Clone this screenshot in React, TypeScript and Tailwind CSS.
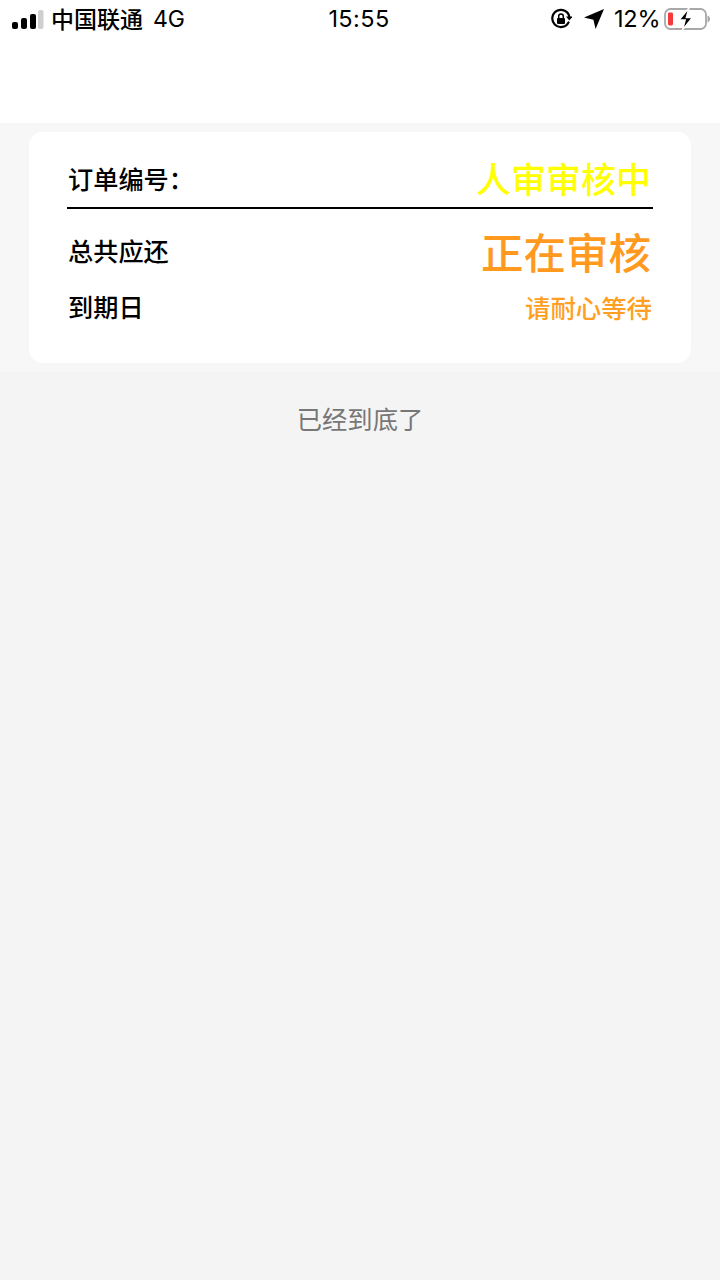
export default function App() {
  const cjk = "font-['Noto_Sans_CJK_SC','Noto_Sans',sans-serif]";
  return (
    <div className={`w-[720px] h-[1280px] bg-[#f4f4f4] overflow-hidden flex flex-col ${cjk}`}>
      <div className="bg-white h-[123px] shrink-0">
        <div className="h-[38px] grid grid-cols-[1fr_auto_1fr] items-center pl-[12px] pr-[10px] text-black">
          <div className="flex items-center">
            <svg width="32" height="20" viewBox="0 0 32 20" className="mr-[8px]">
              <rect x="0" y="13" width="6" height="7" rx="2" fill="#000" />
              <rect x="9" y="9" width="6" height="11" rx="2" fill="#000" />
              <rect x="18" y="5" width="6" height="15" rx="2" fill="#000" />
              <rect x="26" y="1" width="5.5" height="19" rx="2" fill="#cfcfcf" />
            </svg>
            <span className="text-[23px] leading-[38px] font-medium -mt-[2px] -ml-[1px]">中国联通</span>
            <span className="text-[23px] leading-[38px] ml-[10px] font-['Inter',sans-serif]">4G</span>
          </div>
          <div className="text-[23.5px] leading-[38px] font-['Inter',sans-serif] tracking-[0.4px] -ml-[4px]">15:55</div>
          <div className="flex items-center justify-end">
            <svg width="22" height="22" viewBox="0 0 22 22" fill="none">
              <path d="M18.5 14.5A8.6 8.6 0 1 1 19.4 9" stroke="#000" strokeWidth="2.2" strokeLinecap="round" />
              <path d="M16 8.5h6.5l-3.2 4z" fill="#000" />
              <rect x="7" y="10" width="8" height="6" rx="1" fill="#000" />
              <path d="M8.7 10V8.3a2.3 2.3 0 0 1 4.6 0V10" stroke="#000" strokeWidth="1.5" />
            </svg>
            <svg width="22" height="22" viewBox="0 0 22 22" className="ml-[11px]">
              <path d="M21 1 12.6 21 10.4 11.8 1 9.6z" fill="#000" />
            </svg>
            <span className="text-[23.5px] leading-[38px] font-['Inter',sans-serif] ml-[9px] w-[50px] tracking-[-0.2px]">12%</span>
            <svg width="46" height="24" viewBox="0 0 46 24" fill="none">
              <rect x="1" y="2" width="41" height="20" rx="5.5" stroke="#a8a8a8" strokeWidth="1.8" />
              <rect x="4" y="5.5" width="5" height="13" rx="1.4" fill="#f43a3a" />
              <path d="M43.5 8.5v7c1.4-.4 2.5-1.8 2.5-3.5s-1.1-3.1-2.5-3.5z" fill="#a8a8a8" />
              <path d="M25 1 15 13h6.2L18.5 23l10-12.5h-6.2z" fill="#000" stroke="#fff" strokeWidth="1.4" />
            </svg>
          </div>
        </div>
      </div>
      <div className="bg-[#f7f7f7] h-[249px] shrink-0 pt-[9px] px-[29px]">
        <div className="bg-white rounded-[14px] h-[231px] pt-[23px] px-[38px]">
          <div className="flex items-center justify-between h-[54px] border-b-2 border-black pr-[2px] pb-[7px]">
            <span className="text-[25.2px] font-medium text-black leading-[40px] ml-[1px]">订单编号：</span>
            <span className="text-[35px] font-medium text-[#ffff00] leading-[40px]">人审审核中</span>
          </div>
          <div className="flex items-center justify-between h-[87px] pr-[2px] pb-[3px]">
            <span className="text-[25.2px] font-medium text-black leading-none ml-[1px]">总共应还</span>
            <span className="text-[42.5px] font-medium text-[#ff9a1f] leading-none">正在审核</span>
          </div>
          <div className="flex items-center justify-between h-[22px] pr-[1px]">
            <span className="text-[25.2px] font-medium text-black leading-none ml-[1px]">到期日</span>
            <span className="text-[25.4px] font-medium text-[#ff9f24] leading-none mt-[2px]">请耐心等待</span>
          </div>
        </div>
      </div>
      <div className="text-center text-[25.3px] text-[#777777] leading-[34px] pt-[29px]">已经到底了</div>
    </div>
  );
}
